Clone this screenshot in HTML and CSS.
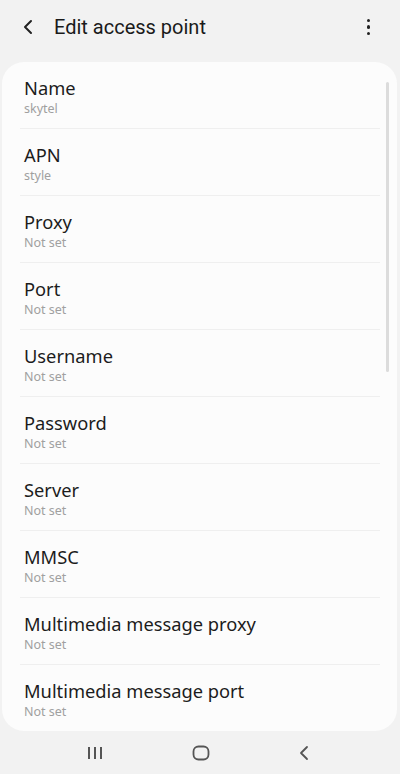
FILE: index.html
```html
<!DOCTYPE html>
<html>
  <head>
    <title>Edit access point</title>
    <link rel="stylesheet" href="styles.css">
  </head>
  <body>
    <div class="app-bar">
      <svg class="back-icon" width="12" height="16" viewBox="0 0 12 16">
        <path d="M9 2 L3 8 L9 14" fill="none" stroke="#222" stroke-width="2" stroke-linecap="round" stroke-linejoin="round"/>
      </svg>
      <h1 class="app-title">Edit access point</h1>
      <div class="more-button">
        <span class="dot"></span>
        <span class="dot"></span>
        <span class="dot"></span>
      </div>
    </div>

    <div class="card">
      <div class="scrollbar"></div>
      <div class="setting">
        <p class="setting-title">Name</p>
        <p class="setting-value">skytel</p>
      </div>
      <div class="setting">
        <p class="setting-title">APN</p>
        <p class="setting-value">style</p>
      </div>
      <div class="setting">
        <p class="setting-title">Proxy</p>
        <p class="setting-value">Not set</p>
      </div>
      <div class="setting">
        <p class="setting-title">Port</p>
        <p class="setting-value">Not set</p>
      </div>
      <div class="setting">
        <p class="setting-title">Username</p>
        <p class="setting-value">Not set</p>
      </div>
      <div class="setting">
        <p class="setting-title">Password</p>
        <p class="setting-value">Not set</p>
      </div>
      <div class="setting">
        <p class="setting-title">Server</p>
        <p class="setting-value">Not set</p>
      </div>
      <div class="setting">
        <p class="setting-title">MMSC</p>
        <p class="setting-value">Not set</p>
      </div>
      <div class="setting">
        <p class="setting-title">Multimedia message proxy</p>
        <p class="setting-value">Not set</p>
      </div>
      <div class="setting last">
        <p class="setting-title">Multimedia message port</p>
        <p class="setting-value">Not set</p>
      </div>
    </div>

    <!-- system navigation -->
    <div class="nav-bar">
      <svg width="16" height="14" viewBox="0 0 16 14">
        <path d="M2 1 V13 M8 1 V13 M14 1 V13" stroke="#555" stroke-width="2"/>
      </svg>
      <svg width="18" height="16" viewBox="0 0 18 16">
        <rect x="1.5" y="1.5" width="15" height="13" rx="5" fill="none" stroke="#555" stroke-width="1.8"/>
      </svg>
      <svg width="12" height="16" viewBox="0 0 12 16">
        <path d="M9 2 L3 8 L9 14" fill="none" stroke="#555" stroke-width="1.8" stroke-linecap="round" stroke-linejoin="round"/>
      </svg>
    </div>
  </body>
</html>
```

FILE: styles.css
```css
body {
  margin: 0;
  background-color: #f2f2f2;
  font-family: "Noto Sans", Roboto, Arial, sans-serif;
  color: #1c1c1c;
  width: 400px;
  height: 774px;
  overflow: hidden;
}

.app-bar {
  display: flex;
  align-items: center;
  height: 54px;
  padding: 0 30px 0 22px;
}

.back-icon {
  margin-right: 20px;
}

.app-title {
  flex: 1;
  margin: 0;
  font-family: Roboto, "Noto Sans", sans-serif;
  font-size: 20px;
  font-weight: normal;
  color: #1a1a1a;
}

.more-button {
  display: flex;
  flex-direction: column;
  gap: 3px;
}

.dot {
  width: 3.5px;
  height: 3.5px;
  border-radius: 50%;
  background-color: #222;
}

.card {
  position: relative;
  margin: 8px 3px 0 2px;
  height: 669px;
  background-color: #fcfcfc;
  border-radius: 22px;
  padding: 0 17px 0 18px;
  overflow: hidden;
}

.scrollbar {
  position: absolute;
  top: 20px;
  right: 8px;
  width: 3px;
  height: 290px;
  border-radius: 2px;
  background-color: #dcdcdc;
}

.setting {
  height: 67px;
  padding: 3px 4px 0 4px;
  box-sizing: border-box;
  border-bottom: 1px solid #efefef;
  display: flex;
  flex-direction: column;
  justify-content: center;
}

.setting.last {
  border-bottom: none;
}

.setting-title {
  margin: 0 0 1px 0;
  font-size: 18.3px;
  line-height: 22px;
  color: #1c1c1c;
}

.setting-value {
  margin: 0;
  font-size: 12.5px;
  line-height: 17px;
  color: #a0a0a0;
}

.nav-bar {
  display: flex;
  justify-content: space-between;
  align-items: center;
  height: 43px;
  padding: 0 90px 0 87px;
}
```
